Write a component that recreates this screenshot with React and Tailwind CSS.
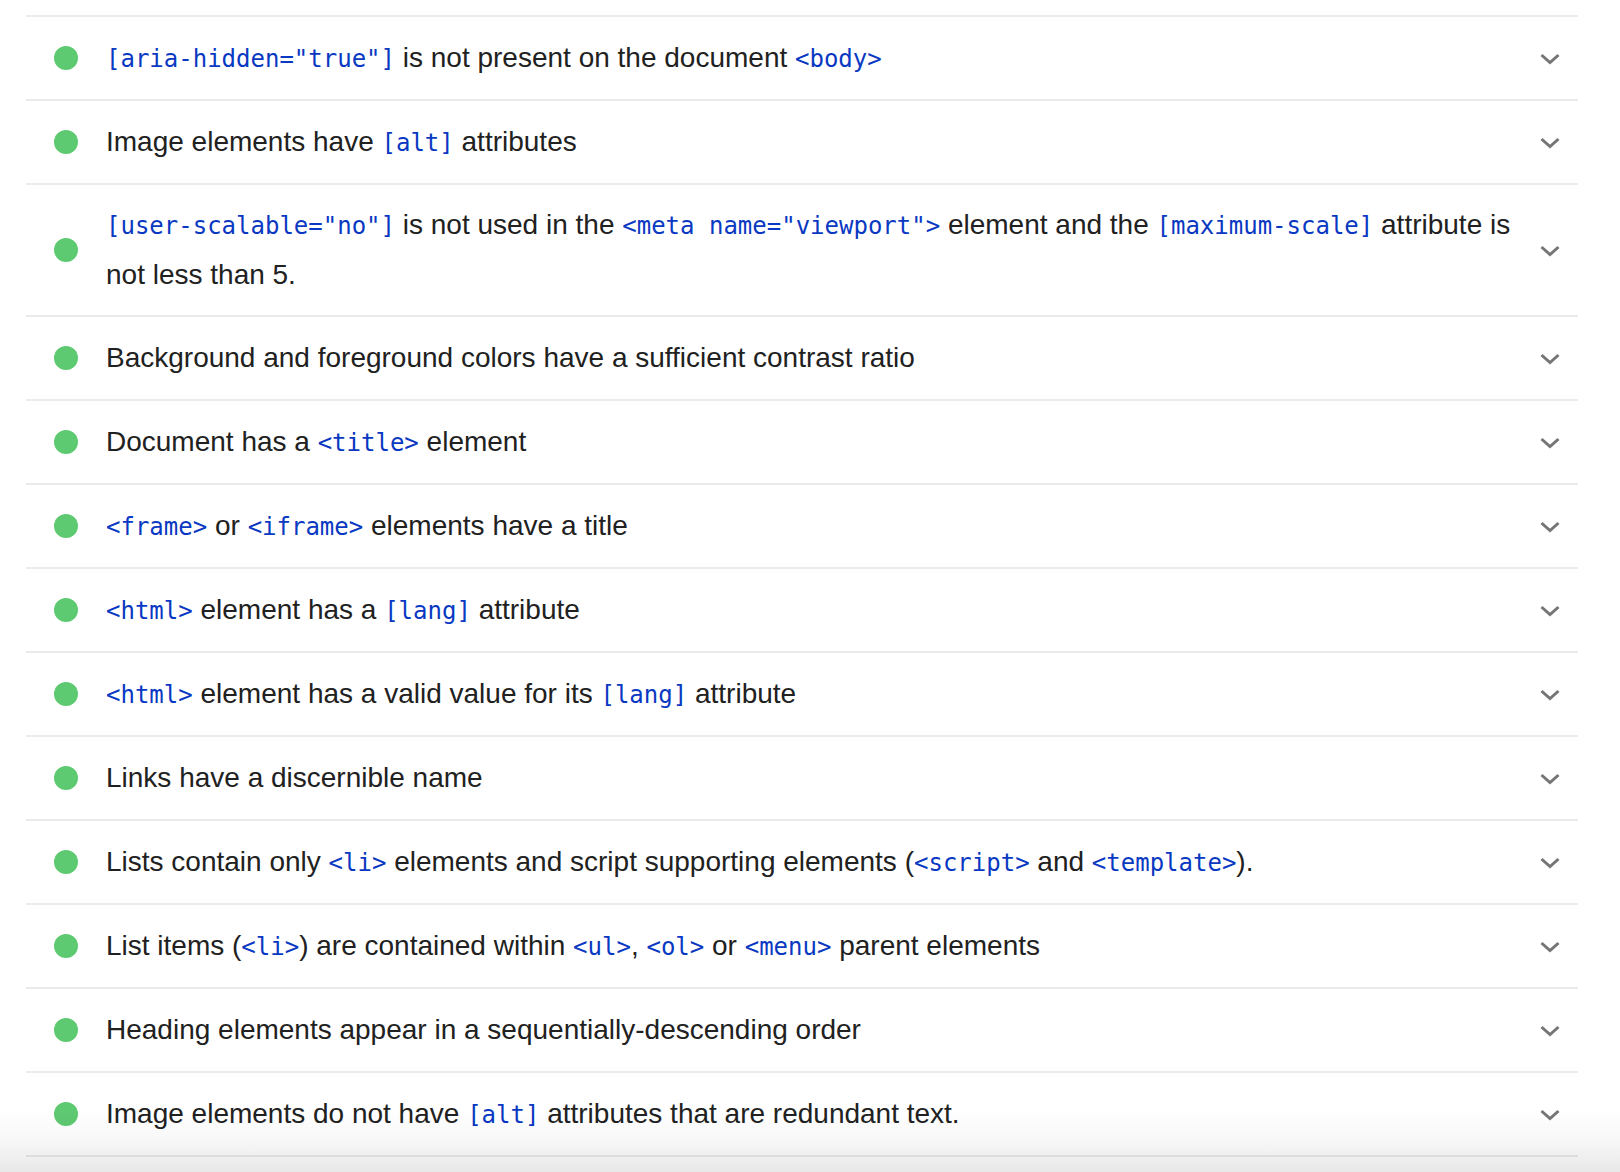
import { useState } from "react";

const audits = [
  "`[aria-hidden=\"true\"]` is not present on the document `<body>`",
  "Image elements have `[alt]` attributes",
  "`[user-scalable=\"no\"]` is not used in the `<meta name=\"viewport\">` element and the `[maximum-scale]` attribute is not less than 5.",
  "Background and foreground colors have a sufficient contrast ratio",
  "Document has a `<title>` element",
  "`<frame>` or `<iframe>` elements have a title",
  "`<html>` element has a `[lang]` attribute",
  "`<html>` element has a valid value for its `[lang]` attribute",
  "Links have a discernible name",
  "Lists contain only `<li>` elements and script supporting elements (`<script>` and `<template>`).",
  "List items (`<li>`) are contained within `<ul>`, `<ol>` or `<menu>` parent elements",
  "Heading elements appear in a sequentially-descending order",
  "Image elements do not have `[alt]` attributes that are redundant text.",
];

// Backtick-delimited parts of a title are shown as code.
function Title({ text }) {
  return (
    <span className="ml-7 min-w-0 flex-1">
      {text.split("`").map((part, i) =>
        i % 2 === 1 ? (
          <code
            key={i}
            className="font-['DejaVu_Sans_Mono',monospace] text-[24px] leading-none text-[#0938c2]"
          >
            {part}
          </code>
        ) : (
          part
        )
      )}
    </span>
  );
}

function Chevron() {
  return (
    <svg
      viewBox="0 0 28 28"
      className="mt-0.5 size-7 shrink-0"
      fill="none"
      stroke="#757575"
      strokeWidth="3"
      aria-hidden="true"
    >
      <path d="M5.5 10 L14 17.5 L22.5 10" />
    </svg>
  );
}

function Audit({ title }) {
  const [open, setOpen] = useState(false);
  return (
    <li className="border-b-2 border-[#ebebeb]">
      <button
        type="button"
        aria-expanded={open}
        onClick={() => setOpen(!open)}
        className="flex min-h-[82px] w-full items-center py-[15px] pr-3.5 pl-7 text-left"
      >
        <span className="size-6 shrink-0 rounded-full bg-[#5dc971]" />
        <Title text={title} />
        <Chevron />
      </button>
    </li>
  );
}

export default function App() {
  return (
    <main className="relative min-h-screen overflow-hidden bg-white pt-[15px] pr-[42px] pb-[15px] pl-[26px] font-['Liberation_Sans',Arial,sans-serif] text-[28px] leading-[50px] text-[#212121]">
      <ul className="border-t-2 border-[#ebebeb]">
        {audits.map((title) => (
          <Audit key={title} title={title} />
        ))}
      </ul>
      <div className="pointer-events-none absolute inset-x-0 bottom-0 h-16 bg-linear-to-b from-black/0 via-black/3 to-black/9" />
    </main>
  );
}
